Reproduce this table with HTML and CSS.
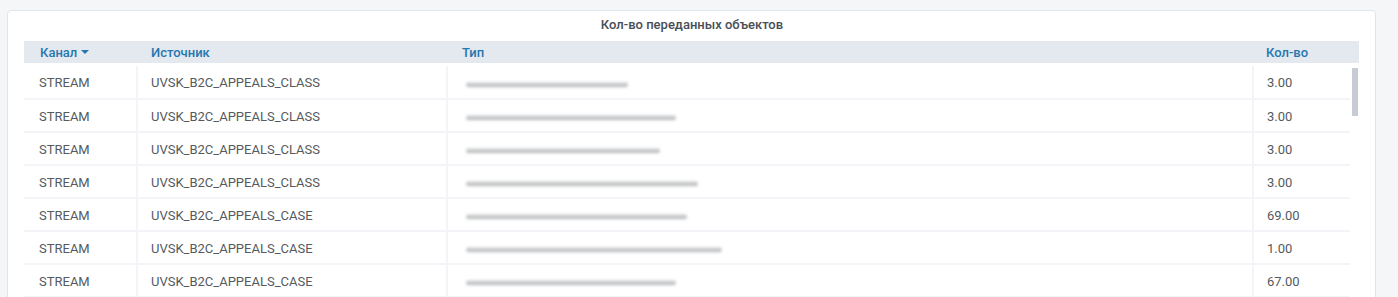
FILE: index.html
```html
<!DOCTYPE html>
<html lang="ru">
<head>
<meta charset="utf-8">
<title>Кол-во переданных объектов</title>
<link rel="stylesheet" href="styles.css">
</head>
<body>
<div class="page">
  <section class="panel">
    <h2 class="panel-title">Кол-во переданных объектов</h2>
    <div class="table">
      <div class="thead">
        <div class="th">Канал <span class="caret"></span></div>
        <div class="th">Источник</div>
        <div class="th th-type">Тип</div>
        <div class="th">Кол-во</div>
      </div>
      <div class="tbody">
        <div class="rows">
          <div class="row"><div class="td">STREAM</div><div class="td">UVSK_B2C_APPEALS_CLASS</div><div class="td td-type"><span class="blur" style="width:162px"></span></div><div class="td">3.00</div></div>
          <div class="row"><div class="td">STREAM</div><div class="td">UVSK_B2C_APPEALS_CLASS</div><div class="td td-type"><span class="blur" style="width:210px"></span></div><div class="td">3.00</div></div>
          <div class="row"><div class="td">STREAM</div><div class="td">UVSK_B2C_APPEALS_CLASS</div><div class="td td-type"><span class="blur" style="width:194px"></span></div><div class="td">3.00</div></div>
          <div class="row"><div class="td">STREAM</div><div class="td">UVSK_B2C_APPEALS_CLASS</div><div class="td td-type"><span class="blur" style="width:232px"></span></div><div class="td">3.00</div></div>
          <div class="row"><div class="td">STREAM</div><div class="td">UVSK_B2C_APPEALS_CASE</div><div class="td td-type"><span class="blur" style="width:221px"></span></div><div class="td">69.00</div></div>
          <div class="row"><div class="td">STREAM</div><div class="td">UVSK_B2C_APPEALS_CASE</div><div class="td td-type"><span class="blur" style="width:256px"></span></div><div class="td">1.00</div></div>
          <div class="row"><div class="td">STREAM</div><div class="td">UVSK_B2C_APPEALS_CASE</div><div class="td td-type"><span class="blur" style="width:210px"></span></div><div class="td">67.00</div></div>
        </div>
        <div class="scroll-track"><div class="scroll-thumb"></div></div>
      </div>
    </div>
  </section>
</div>
</body>
</html>
```
FILE: styles.css
```css
html, body {
  margin: 0;
  height: 297px;
  overflow: hidden;
  background: #f5f6f8;
  font-family: Roboto, "Liberation Sans", Arial, sans-serif;
  font-size: 13px;
  color: #555a60;
}

.page {
  padding: 10px 22px 0 7px;
}

.panel {
  background: #fff;
  border: 1px solid #e0e4eb;
  border-radius: 4px;
  padding: 0 15px 20px 16px;
  min-height: 320px;
}

.panel-title {
  margin: 0;
  height: 30px;
  line-height: 28px;
  text-align: center;
  font-size: 13px;
  font-weight: 500;
  color: #484e56;
}

.table {
  width: 1335px;
}

.thead {
  display: grid;
  grid-template-columns: 112px 310px 806px 107px;
  height: 22px;
  background: #e4e8ef;
  align-items: center;
}

.th {
  padding-left: 16px;
  font-weight: 500;
  color: #2577b0;
  display: flex;
  align-items: center;
}

.th:nth-child(2) { padding-left: 15px; }
.th:nth-child(4) { padding-left: 14px; }

.caret {
  display: inline-block;
  width: 0;
  height: 0;
  margin-left: 4px;
  border-left: 4px solid transparent;
  border-right: 4px solid transparent;
  border-top: 4px solid #2577b0;
}

.tbody {
  display: flex;
  margin-top: 3px;
}

.rows {
  flex: 1;
}

.row {
  display: grid;
  grid-template-columns: 112px 310px 806px 98px;
  height: 33px;
  border-bottom: 2px solid #f2f4f7;
  box-sizing: border-box;
}

.row:first-child {
  height: 34px;
}

.td {
  display: flex;
  align-items: center;
  padding-left: 15px;
  padding-top: 1px;
  box-sizing: border-box;
}

.td + .td {
  border-left: 2px solid #f2f4f7;
  padding-left: 13px;
}

.td-type {
  padding-left: 18px !important;
}

.blur {
  display: block;
  height: 5px;
  margin-top: 3px;
  border-radius: 3px;
  background: linear-gradient(180deg, #e2e3e5, #c2c4c7 50%, #a2a5a9);
  filter: blur(1.4px);
  opacity: 0.9;
}

.scroll-track {
  width: 9px;
  background: #fff;
  padding: 2px 1px 0 2px;
  box-sizing: border-box;
}

.scroll-thumb {
  width: 6px;
  height: 48px;
  background: #c7ccd4;
}
```
